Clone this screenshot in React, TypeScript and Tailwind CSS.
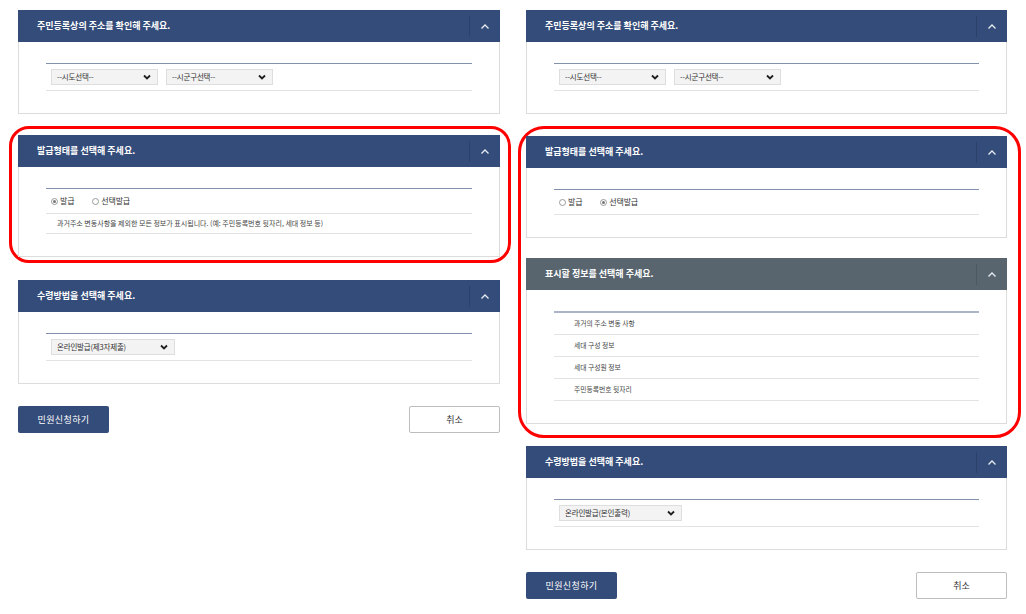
import React from 'react';

const KR = { fontFamily: '"Noto Sans CJK KR", "Noto Sans", sans-serif' };

const ChevronUp = () => (
    <svg width="10" height="7" viewBox="0 0 10 7" fill="none">
        <polyline points="1.5,5.5 5,2 8.5,5.5" stroke="#e8ecf3" strokeWidth="1.3" />
    </svg>
);

const ChevronDown = () => (
    <svg width="8" height="6" viewBox="0 0 8 6" fill="none">
        <polyline points="1,1.5 4,4.5 7,1.5" stroke="#1f1f1f" strokeWidth="1.8" />
    </svg>
);

const Panel: React.FC<{ title: string; gray?: boolean; thickLine?: boolean; children: React.ReactNode }> = ({ title, gray, thickLine, children }) => (
    <section>
        <header className={`h-[32px] flex items-center justify-between ${gray ? 'bg-[#58656e]' : 'bg-[#344c79]'}`}>
            <span className="pl-[19px] text-[9px] font-bold text-white">{title}</span>
            <div className="flex items-center h-full">
                <div className={`w-px h-[21px] ${gray ? 'bg-[#4d5962]' : 'bg-[#2c416a]'}`}></div>
                <div className="w-[30px] flex justify-center">
                    <ChevronUp />
                </div>
            </div>
        </header>
        <div className="border border-t-0 border-[#dcdcdc] pt-[21px] pb-[22px] px-[27px]">
            <div className={thickLine ? 'border-t-2 border-[#aab4c6]' : 'border-t border-[#8391ad]'}>{children}</div>
        </div>
    </section>
);

const FakeSelect: React.FC<{ label: string; width: string }> = ({ label, width }) => (
    <div className={`${width} h-[16px] bg-[#f3f3f3] border border-[#dedede] flex items-center justify-between pl-[5px] pr-[6px]`}>
        <span className="text-[7.5px] text-[#333] tracking-[-0.2px]">{label}</span>
        <ChevronDown />
    </div>
);

const Radio: React.FC<{ label: string; checked?: boolean }> = ({ label, checked }) => (
    <label className="flex items-center gap-[2px]">
        <span className="w-[7px] h-[7px] rounded-full border border-[#9a9a9a] bg-white flex items-center justify-center">
            {checked && <span className="w-[3px] h-[3px] rounded-full bg-[#777]"></span>}
        </span>
        <span className="text-[8px] text-[#333] tracking-[-0.2px]">{label}</span>
    </label>
);

const Row: React.FC<{ h?: string; children: React.ReactNode }> = ({ h = 'h-[27px]', children }) => (
    <div className={`${h} flex items-center border-b border-[#e3e3e3]`}>{children}</div>
);

const AddressPanel = () => (
    <Panel title="주민등록상의 주소를 확인해 주세요.">
        <Row>
            <div className="flex gap-[8px] pl-[5px]">
                <FakeSelect label="--시도선택--" width="w-[107px]" />
                <FakeSelect label="--시군구선택--" width="w-[107px]" />
            </div>
        </Row>
    </Panel>
);

const Buttons = () => (
    <div className="mt-[22px] flex justify-between">
        <button className="w-[91px] h-[27px] bg-[#344c79] rounded-[2px] text-white text-[9px] tracking-[0.4px]">민원신청하기</button>
        <button className="w-[91px] h-[27px] bg-white border border-[#bdbdbd] rounded-[2px] text-[#333] text-[9px]">취소</button>
    </div>
);

export default function App() {
    return (
        <div className="min-h-screen bg-white pt-[10px] px-[18px] flex gap-[26px] items-start" style={KR}>
            {/* 발급 (left) */}
            <div className="w-[482px]">
                <AddressPanel />
                <div className="mt-[12px] -ml-[9px] -mr-[11px] border-[3px] border-[#ff0000] rounded-[20px] pl-[6px] pr-[8px] pt-[6px] pb-[3px]">
                    <Panel title="발급형태를 선택해 주세요.">
                        <Row h="h-[25px]">
                            <div className="flex gap-[18px] pl-[5px]">
                                <Radio label="발급" checked />
                                <Radio label="선택발급" />
                            </div>
                        </Row>
                        <Row h="h-[20px]">
                            <span className="pl-[11px] text-[7px] text-[#444]">
                                과거주소 변동사항을 제외한 모든 정보가 표시됩니다. (예: 주민등록번호 뒷자리, 세대 정보 등)
                            </span>
                        </Row>
                    </Panel>
                </div>
                <div className="mt-[17px]">
                    <Panel title="수령방법을 선택해 주세요.">
                        <Row>
                            <div className="pl-[5px]">
                                <FakeSelect label="온라인발급(제3자제출)" width="w-[124px]" />
                            </div>
                        </Row>
                    </Panel>
                </div>
                <Buttons />
            </div>

            {/* 선택발급 (right) */}
            <div className="w-[481px]">
                <AddressPanel />
                <div className="mt-[12px] -ml-[8px] -mr-[14px] border-[3px] border-[#ff0000] rounded-[26px] pl-[5px] pr-[11px] pt-[7px] pb-[11px]">
                    <Panel title="발급형태를 선택해 주세요.">
                        <Row h="h-[25px]">
                            <div className="flex gap-[18px] pl-[5px]">
                                <Radio label="발급" />
                                <Radio label="선택발급" checked />
                            </div>
                        </Row>
                    </Panel>
                    <div className="mt-[20px]">
                        <Panel title="표시할 정보를 선택해 주세요." gray thickLine>
                            {['과거의 주소 변동 사항', '세대 구성 정보', '세대 구성원 정보', '주민등록번호 뒷자리'].map((item) => (
                                <Row key={item} h="h-[22px]">
                                    <span className="pl-[20px] text-[6.8px] text-[#444]">{item}</span>
                                </Row>
                            ))}
                        </Panel>
                    </div>
                </div>
                <div className="mt-[8px]">
                    <Panel title="수령방법을 선택해 주세요.">
                        <Row>
                            <div className="pl-[5px]">
                                <FakeSelect label="온라인발급(본인출력)" width="w-[123px]" />
                            </div>
                        </Row>
                    </Panel>
                </div>
                <Buttons />
            </div>
        </div>
    );
}
